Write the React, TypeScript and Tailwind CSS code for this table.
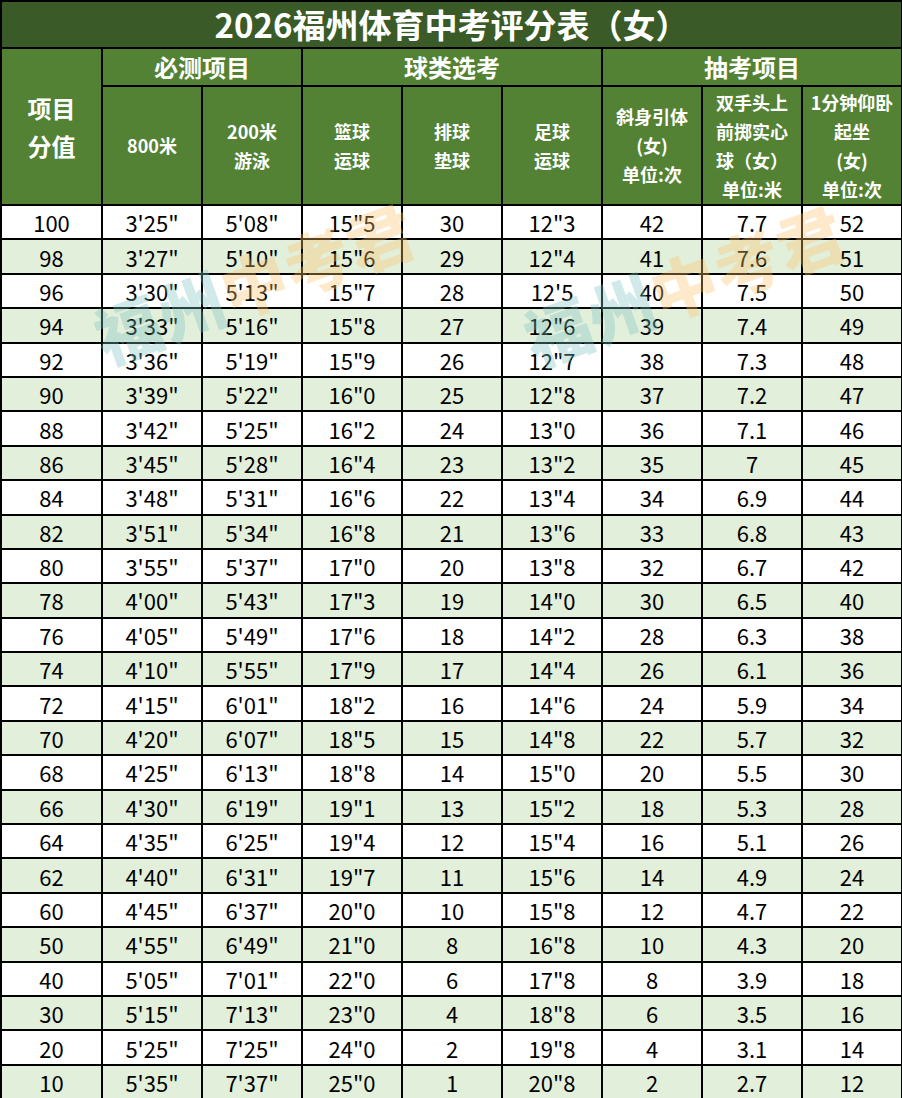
import React from "react";

const rows: string[][] = [
  ["100", "3'25\"", "5'08\"", "15\"5", "30", "12\"3", "42", "7.7", "52"],
  ["98", "3'27\"", "5'10\"", "15\"6", "29", "12\"4", "41", "7.6", "51"],
  ["96", "3'30\"", "5'13\"", "15\"7", "28", "12'5", "40", "7.5", "50"],
  ["94", "3'33\"", "5'16\"", "15\"8", "27", "12\"6", "39", "7.4", "49"],
  ["92", "3'36\"", "5'19\"", "15\"9", "26", "12\"7", "38", "7.3", "48"],
  ["90", "3'39\"", "5'22\"", "16\"0", "25", "12\"8", "37", "7.2", "47"],
  ["88", "3'42\"", "5'25\"", "16\"2", "24", "13\"0", "36", "7.1", "46"],
  ["86", "3'45\"", "5'28\"", "16\"4", "23", "13\"2", "35", "7", "45"],
  ["84", "3'48\"", "5'31\"", "16\"6", "22", "13\"4", "34", "6.9", "44"],
  ["82", "3'51\"", "5'34\"", "16\"8", "21", "13\"6", "33", "6.8", "43"],
  ["80", "3'55\"", "5'37\"", "17\"0", "20", "13\"8", "32", "6.7", "42"],
  ["78", "4'00\"", "5'43\"", "17\"3", "19", "14\"0", "30", "6.5", "40"],
  ["76", "4'05\"", "5'49\"", "17\"6", "18", "14\"2", "28", "6.3", "38"],
  ["74", "4'10\"", "5'55\"", "17\"9", "17", "14\"4", "26", "6.1", "36"],
  ["72", "4'15\"", "6'01\"", "18\"2", "16", "14\"6", "24", "5.9", "34"],
  ["70", "4'20\"", "6'07\"", "18\"5", "15", "14\"8", "22", "5.7", "32"],
  ["68", "4'25\"", "6'13\"", "18\"8", "14", "15\"0", "20", "5.5", "30"],
  ["66", "4'30\"", "6'19\"", "19\"1", "13", "15\"2", "18", "5.3", "28"],
  ["64", "4'35\"", "6'25\"", "19\"4", "12", "15\"4", "16", "5.1", "26"],
  ["62", "4'40\"", "6'31\"", "19\"7", "11", "15\"6", "14", "4.9", "24"],
  ["60", "4'45\"", "6'37\"", "20\"0", "10", "15\"8", "12", "4.7", "22"],
  ["50", "4'55\"", "6'49\"", "21\"0", "8", "16\"8", "10", "4.3", "20"],
  ["40", "5'05\"", "7'01\"", "22\"0", "6", "17\"8", "8", "3.9", "18"],
  ["30", "5'15\"", "7'13\"", "23\"0", "4", "18\"8", "6", "3.5", "16"],
  ["20", "5'25\"", "7'25\"", "24\"0", "2", "19\"8", "4", "3.1", "14"],
  ["10", "5'35\"", "7'37\"", "25\"0", "1", "20\"8", "2", "2.7", "12"],
];

const subHeads: string[][] = [
  ["800米"],
  ["200米", "游泳"],
  ["篮球", "运球"],
  ["排球", "垫球"],
  ["足球", "运球"],
  ["斜身引体", "(女)", "单位:次"],
  ["双手头上", "前掷实心", "球（女）", "单位:米"],
  ["1分钟仰卧", "起坐", "(女)", "单位:次"],
];

function Watermark({ className }: { className: string }) {
  return (
    <div
      className={`pointer-events-none absolute -rotate-[20deg] whitespace-nowrap text-[66px] font-black leading-none tracking-[1px] ${className}`}
    >
      <span className="text-[#7cc4c0]/35">福州</span>
      <span className="text-[#fbc46a]/35">中考君</span>
    </div>
  );
}

export default function App() {
  const font = { fontFamily: '"Noto Sans CJK SC", "Microsoft YaHei", sans-serif' };
  return (
    <div className="relative w-[902px] bg-white" style={font}>
      <table className="w-[902px] table-fixed border-collapse border-2 border-black">
        <colgroup>
          <col className="w-[101px]" />
          {Array.from({ length: 8 }).map((_, i) => (
            <col key={i} className="w-[100px]" />
          ))}
        </colgroup>
        <thead>
          <tr className="h-[47px]">
            <th
              colSpan={9}
              className="border-2 border-black bg-[#3a5a27] text-center text-[33px] font-bold leading-none text-white"
            >
              2026福州体育中考评分表（女）
            </th>
          </tr>
          <tr className="h-[38px] bg-[#548235] text-white">
            <th
              rowSpan={2}
              className="border-2 border-black text-[24px] font-bold leading-[38px]"
            >
              项目
              <br />
              分值
            </th>
            <th colSpan={2} className="border-2 border-black text-[24px] font-bold leading-none">
              必测项目
            </th>
            <th colSpan={3} className="border-2 border-black text-[24px] font-bold leading-none">
              球类选考
            </th>
            <th colSpan={3} className="border-2 border-black text-[24px] font-bold leading-none">
              抽考项目
            </th>
          </tr>
          <tr className="h-[119px] bg-[#548235] text-white">
            {subHeads.map((lines, i) => (
              <th
                key={i}
                className="border-2 border-black px-0 text-[18px] font-bold leading-[29px]"
              >
                {lines.map((l, j) => (
                  <div key={j} className="whitespace-nowrap">
                    {l}
                  </div>
                ))}
              </th>
            ))}
          </tr>
        </thead>
        <tbody>
          {rows.map((r, i) => (
            <tr
              key={r[0]}
              className={`h-[34.4px] ${i % 2 === 1 ? "bg-[#e2efda]" : "bg-white"}`}
            >
              {r.map((c, j) => (
                <td
                  key={j}
                  className="border-2 border-black p-0 text-center text-[22px] leading-none text-black"
                >
                  {c}
                </td>
              ))}
            </tr>
          ))}
        </tbody>
      </table>
      <Watermark className="left-[86px] top-[248px]" />
      <Watermark className="left-[516px] top-[250px]" />
    </div>
  );
}
